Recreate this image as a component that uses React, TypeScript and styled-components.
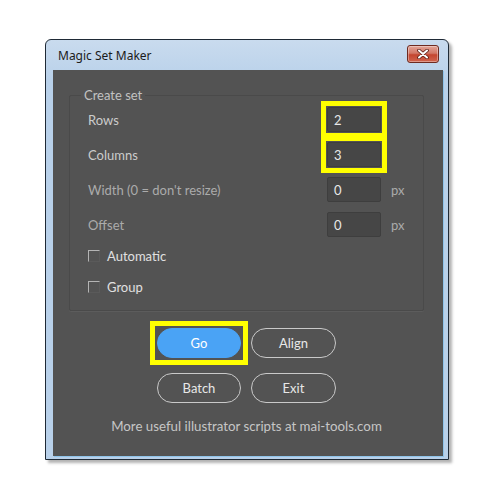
import React from 'react';
import styled, { createGlobalStyle } from 'styled-components';

const GlobalStyle = createGlobalStyle`
  html, body {
    margin: 0;
    padding: 0;
    background: #ffffff;
  }
  body {
    font-family: 'Lato', 'Liberation Sans', sans-serif;
  }
`;

const Page = styled.div`
  width: 500px;
  height: 502px;
  box-sizing: border-box;
  padding: 39px 0 0 45px;
`;

const Window = styled.div`
  width: 404px;
  height: 421px;
  box-sizing: border-box;
  display: flex;
  flex-direction: column;
  border: 1px solid #1f2a36;
  border-radius: 6px 6px 0 0;
  background: linear-gradient(#c9dbee, #b9d1ea 40px);
  box-shadow: 3px 3px 3px rgba(0, 0, 0, 0.3);
  padding: 0 5px 3px 7px;
`;

const TitleBar = styled.div`
  height: 30px;
  flex: none;
  display: flex;
  align-items: center;
  justify-content: space-between;
  padding-left: 5px;
`;

const Title = styled.span`
  font-family: 'Noto Sans', 'Open Sans', sans-serif;
  font-size: 12px;
  color: #1b1b1b;
`;

const CloseButton = styled.div`
  width: 32px;
  height: 18px;
  margin: -2px 4px 0 0;
  box-sizing: border-box;
  border: 1px solid #6e2a20;
  border-radius: 3px;
  background: linear-gradient(#e3a497 0%, #d27766 45%, #c4452f 55%, #d0644e 100%);
  display: flex;
  align-items: center;
  justify-content: center;
  box-shadow: inset 0 0 0 1px rgba(255, 255, 255, 0.35);
`;

const Content = styled.div`
  flex: 1;
  background: #535353;
  display: flex;
  flex-direction: column;
  align-items: stretch;
  padding-right: 3px;
  box-shadow: 1px 1px 0 #8fc4ea;
`;

const Group = styled.fieldset`
  margin: 18px 16px 0 16px;
  padding: 0 16px 8px 18px;
  border: 1px solid #4a4a4a;
  box-shadow: 0 1px 0 #5c5c5c;
  border-radius: 2px;
`;

const Legend = styled.legend`
  margin-left: -7px;
  padding: 0 3px;
  line-height: 14px;
  font-size: 13px;
  color: #c2c2c2;
`;

const FieldRow = styled.div`
  height: 35px;
  display: grid;
  grid-template-columns: 1fr 54px 26px;
  align-items: center;
`;

const Label = styled.span<{ dim?: boolean }>`
  font-size: 13px;
  color: ${({ dim }) => (dim ? '#ababab' : '#cccccc')};
`;

const Highlight = styled.div<{ gap: number }>`
  margin: ${({ gap }) => -(gap + 5)}px;
  padding: ${({ gap }) => gap}px;
  border: 5px solid #ffff00;
  display: grid;
`;

const NumberBox = styled.div`
  height: 25px;
  box-sizing: border-box;
  background: #464646;
  border: 1px solid #3e3e3e;
  border-radius: 2px;
  padding-left: 6px;
  display: flex;
  align-items: center;
  font-size: 13px;
  color: #e8e8e8;
`;

const Unit = styled.span`
  padding-left: 10px;
  font-size: 13px;
  color: #ababab;
`;

const CheckRow = styled.label`
  height: 31px;
  display: flex;
  align-items: center;
  gap: 7px;
  font-size: 13px;
  color: #e0e0e0;

  &:first-of-type {
    margin-top: -2px;
  }
`;

const CheckBox = styled.span`
  width: 12px;
  height: 12px;
  box-sizing: border-box;
  border-top: 1px solid #b4b4b4;
  border-left: 1px solid #b4b4b4;
  border-right: 1px solid #5a5a5a;
  border-bottom: 1px solid #5a5a5a;
`;

const ButtonGrid = styled.div`
  margin-top: 17px;
  display: grid;
  grid-template-columns: 84px 85px;
  column-gap: 10px;
  row-gap: 15px;
  justify-content: center;
`;

const Button = styled.button<{ primary?: boolean }>`
  width: 100%;
  height: 30px;
  box-sizing: border-box;
  border-radius: 15px;
  border: 1px solid ${({ primary }) => (primary ? '#4aa3f5' : '#c9c9c9')};
  background: ${({ primary }) => (primary ? '#4aa3f5' : 'transparent')};
  color: ${({ primary }) => (primary ? '#ffffff' : '#e8e8e8')};
  font-family: 'Lato', 'Liberation Sans', sans-serif;
  font-size: 13px;
  padding: 0;
`;

const Footer = styled.div`
  margin-top: 15px;
  text-align: center;
  font-size: 13.3px;
  color: #c6c6c6;
`;

const fields = [
  { label: 'Rows', value: '2', highlight: true },
  { label: 'Columns', value: '3', highlight: true },
  { label: "Width (0 = don't resize)", value: '0', unit: 'px', dim: true },
  { label: 'Offset', value: '0', unit: 'px', dim: true },
];

export default function App() {
  return (
    <Page>
      <GlobalStyle />
      <Window>
        <TitleBar>
          <Title>Magic Set Maker</Title>
          <CloseButton>
            <svg width="12" height="10" viewBox="0 0 12 10">
              <path d="M2 1.5 L10 8.5 M10 1.5 L2 8.5" stroke="#5a1d14" strokeWidth="3.6" strokeLinecap="round" />
              <path d="M2 1.5 L10 8.5 M10 1.5 L2 8.5" stroke="#ffffff" strokeWidth="2" strokeLinecap="round" />
            </svg>
          </CloseButton>
        </TitleBar>
        <Content>
          <Group>
            <Legend>Create set</Legend>
            {fields.map(f => (
              <FieldRow key={f.label}>
                <Label dim={f.dim}>{f.label}</Label>
                {f.highlight ? (
                  <Highlight gap={1}>
                    <NumberBox>{f.value}</NumberBox>
                  </Highlight>
                ) : (
                  <NumberBox>{f.value}</NumberBox>
                )}
                <Unit>{f.unit}</Unit>
              </FieldRow>
            ))}
            <CheckRow>
              <CheckBox />
              Automatic
            </CheckRow>
            <CheckRow>
              <CheckBox />
              Group
            </CheckRow>
          </Group>
          <ButtonGrid>
            <Highlight gap={2}>
              <Button primary>Go</Button>
            </Highlight>
            <Button>Align</Button>
            <Button>Batch</Button>
            <Button>Exit</Button>
          </ButtonGrid>
          <Footer>More useful illustrator scripts at mai-tools.com</Footer>
        </Content>
      </Window>
    </Page>
  );
}
